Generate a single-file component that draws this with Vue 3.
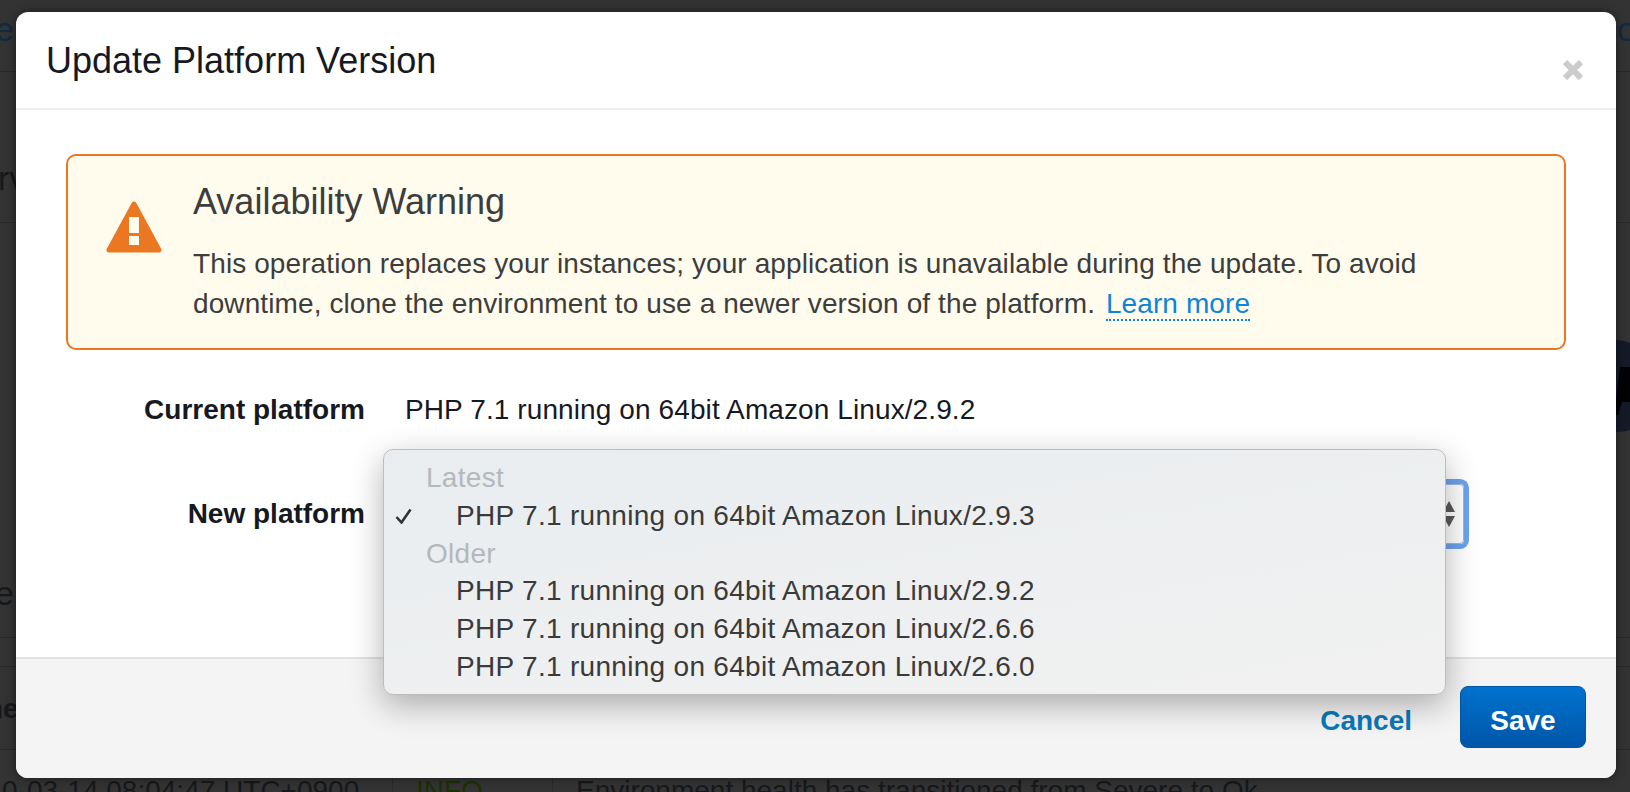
<script setup>
const groups = [
  {
    name: 'Latest',
    items: [{ label: 'PHP 7.1 running on 64bit Amazon Linux/2.9.3', checked: true }]
  },
  {
    name: 'Older',
    items: [
      { label: 'PHP 7.1 running on 64bit Amazon Linux/2.9.2' },
      { label: 'PHP 7.1 running on 64bit Amazon Linux/2.6.6' },
      { label: 'PHP 7.1 running on 64bit Amazon Linux/2.6.0' }
    ]
  }
]
</script>

<template>
  <div class="page">
    <div class="bg-row top-row">
      <span class="bg-link">er</span>
      <span class="bg-link right-peek">co</span>
    </div>
    <div class="bg-row section-row"><span class="bg-title">rv</span></div>
    <div class="bg-row logo-row">
      <span class="bg-title peek-low">e</span>
      <svg class="bg-logo" width="14" height="92" viewBox="0 0 14 92">
        <path d="M0 0 C5 0 10 1 14 3 V90 C10 91 5 92 0 92 Z" fill="#141a28" />
        <path d="M4 27 H14 V62 H6 L2 75 H0 V60 Z" fill="#020204" />
      </svg>
    </div>
    <div class="bg-row head-gap"></div>
    <div class="bg-row head-row"><span class="bg-bold">ne</span></div>
    <div class="log-row">
      <span class="log-time">0-03-14 08:04:47 UTC+0900</span>
      <span class="log-level">INFO</span>
      <span class="log-msg">Environment health has transitioned from Severe to Ok.</span>
    </div>

    <div class="modal">
      <div class="modal-header">
        <h2>Update Platform Version</h2>
        <svg class="close" width="20" height="20" viewBox="0 0 20 20">
          <path d="M2 2 L18 18 M18 2 L2 18" stroke="#cccccc" stroke-width="6" fill="none" />
        </svg>
      </div>

      <div class="modal-body">
        <div class="alert">
          <svg class="alert-icon" width="56" height="53" viewBox="0 0 56 53">
            <path d="M28 4 L53 50 L3 50 Z" fill="#ec7722" stroke="#ec7722" stroke-width="5" stroke-linejoin="round" />
            <rect x="23" y="17" width="10" height="16" fill="#fffcee" />
            <rect x="23" y="36" width="10" height="9" fill="#fffcee" />
          </svg>
          <div class="alert-text">
            <h3>Availability Warning</h3>
            <p>
              This operation replaces your instances; your application is unavailable during the update. To avoid<br />
              downtime, clone the environment to use a newer version of the platform.
              <a class="learn">Learn more</a>
            </p>
          </div>
        </div>

        <div class="form-row current">
          <label>Current platform</label>
          <span class="value">PHP 7.1 running on 64bit Amazon Linux/2.9.2</span>
        </div>
        <div class="form-row">
          <label>New platform</label>
          <div class="select">
            <svg width="16" height="26" viewBox="0 0 16 26">
              <path d="M8 0 L14 11 L2 11 Z M2 15 L14 15 L8 26 Z" fill="#5a5a5a" />
            </svg>
          </div>
        </div>
      </div>

      <div class="modal-footer">
        <a class="cancel">Cancel</a>
        <button class="save">Save</button>
      </div>

      <div class="popup">
        <template v-for="group in groups" :key="group.name">
          <div class="popup-group">{{ group.name }}</div>
          <div v-for="item in group.items" :key="item.label" class="popup-item">
            <svg v-if="item.checked" class="check" width="17" height="16" viewBox="0 0 17 16">
              <path d="M1.5 9 L6.5 14.5 L15.5 1.5" stroke="#333333" stroke-width="2.6" fill="none" />
            </svg>
            {{ item.label }}
          </div>
        </template>
      </div>
    </div>
  </div>
</template>

<style scoped>
.page {
  position: relative;
  width: 1630px;
  height: 792px;
  overflow: hidden;
  background: #333333;
  font-family: "Liberation Sans", Arial, sans-serif;
  color: #16191f;
}

.bg-row {
  position: relative;
  border-bottom: 1px solid #2a2a2a;
  box-sizing: border-box;
}

.top-row {
  height: 72px;
  padding-top: 10px;
}

.section-row {
  height: 151px;
  padding-top: 87px;
}

.logo-row {
  height: 415px;
}

.head-gap {
  height: 29px;
}

.head-row {
  height: 83px;
  padding-top: 26px;
}

.bg-link {
  font-size: 34px;
  color: #102a3f;
  margin-left: -5px;
}

.right-peek {
  position: absolute;
  left: 1600px;
  top: 10px;
  margin: 0;
}

.bg-title {
  font-size: 34px;
  color: #16181b;
  margin-left: -2px;
}

.peek-low {
  position: absolute;
  left: -5px;
  top: 351px;
  margin: 0;
}

.bg-bold {
  font-size: 28px;
  font-weight: 700;
  color: #16181b;
  margin-left: -14px;
}

.bg-logo {
  position: absolute;
  left: 1616px;
  top: 117px;
}

.log-row {
  display: flex;
  height: 43px;
  font-size: 28px;
  line-height: 82px;
  color: #16181b;
}

.log-time {
  width: 393px;
  padding-left: 2px;
  box-sizing: border-box;
  border-right: 1px solid #2a2a2a;
}

.log-level {
  width: 160px;
  padding-left: 23px;
  box-sizing: border-box;
  border-right: 1px solid #2a2a2a;
  color: #1c3005;
}

.log-msg {
  padding-left: 23px;
}

.modal {
  position: absolute;
  left: 16px;
  top: 12px;
  width: 1600px;
  height: 766px;
  display: flex;
  flex-direction: column;
  background: #ffffff;
  border-radius: 12px;
  box-shadow: 0 0 10px rgba(0, 0, 0, 0.5);
}

.modal-header {
  display: flex;
  justify-content: space-between;
  height: 98px;
  box-sizing: border-box;
  padding: 0 33px 0 30px;
  border-bottom: 2px solid #eeeeee;
}

.modal-header h2 {
  margin: 0;
  font-size: 36px;
  font-weight: 400;
  line-height: 98px;
  color: #16191f;
}

.close {
  margin-top: 48px;
}

.modal-body {
  flex: 1;
  padding: 44px 50px 0 50px;
}

.alert {
  display: flex;
  height: 196px;
  box-sizing: border-box;
  padding: 24px 0 0 38px;
  gap: 31px;
  background: #fffcee;
  border: 2px solid #ec7722;
  border-radius: 10px;
  color: #3d3d3d;
}

.alert-icon {
  margin-top: 20px;
  flex-shrink: 0;
}

.alert-text h3 {
  margin: 0;
  font-size: 36px;
  font-weight: 400;
  line-height: 44px;
}

.alert-text p {
  margin: 20px 0 0;
  font-size: 28px;
  letter-spacing: 0.1px;
  line-height: 40px;
  white-space: nowrap;
}

.learn {
  margin-left: 3px;
  color: #0a85d9;
  border-bottom: 2px dotted #0a85d9;
}

.form-row {
  display: flex;
  align-items: center;
  margin-top: 54px;
}

.form-row.current {
  margin-top: 40px;
}

.form-row label {
  width: 299px;
  flex-shrink: 0;
  text-align: right;
  font-size: 28px;
  font-weight: 700;
  line-height: 40px;
}

.value {
  margin-left: 40px;
  font-size: 28px;
  letter-spacing: 0.1px;
  line-height: 40px;
}

.select {
  width: 1066px;
  height: 60px;
  margin-left: 33px;
  display: flex;
  align-items: center;
  justify-content: flex-end;
  padding-right: 6px;
  box-sizing: border-box;
  border: 1px solid #9fb8de;
  border-radius: 4px;
  box-shadow: 0 0 0 5px #6ca4ee;
}

.modal-footer {
  display: flex;
  justify-content: flex-end;
  align-items: flex-start;
  height: 121px;
  box-sizing: border-box;
  padding: 27px 30px 0 0;
  gap: 48px;
  background: #f4f4f4;
  border-top: 2px solid #e2e2e2;
  border-radius: 0 0 12px 12px;
}

.cancel {
  font-size: 28px;
  font-weight: 700;
  line-height: 70px;
  color: #0a78b8;
}

.save {
  width: 126px;
  height: 62px;
  padding: 8px 0 0;
  font-family: inherit;
  font-size: 28px;
  font-weight: 700;
  color: #ffffff;
  background: linear-gradient(#0073cf, #0056a8);
  border: 1px solid #0058a8;
  border-radius: 8px;
}

.popup {
  position: absolute;
  left: 367px;
  top: 437px;
  width: 1063px;
  height: 246px;
  box-sizing: border-box;
  padding-top: 9px;
  background: linear-gradient(170deg, #e9edf0, #f1f1f1);
  border: 1px solid #bcbcbc;
  border-radius: 10px;
  box-shadow: 0 10px 32px rgba(0, 0, 0, 0.3);
  font-size: 28px;
  letter-spacing: 0.3px;
  line-height: 37.8px;
  color: #3a3a3a;
}

.popup-group {
  padding-left: 42px;
  color: #b4b8bb;
}

.popup-item {
  position: relative;
  padding-left: 72px;
}

.check {
  position: absolute;
  left: 11px;
  top: 11px;
}
</style>
